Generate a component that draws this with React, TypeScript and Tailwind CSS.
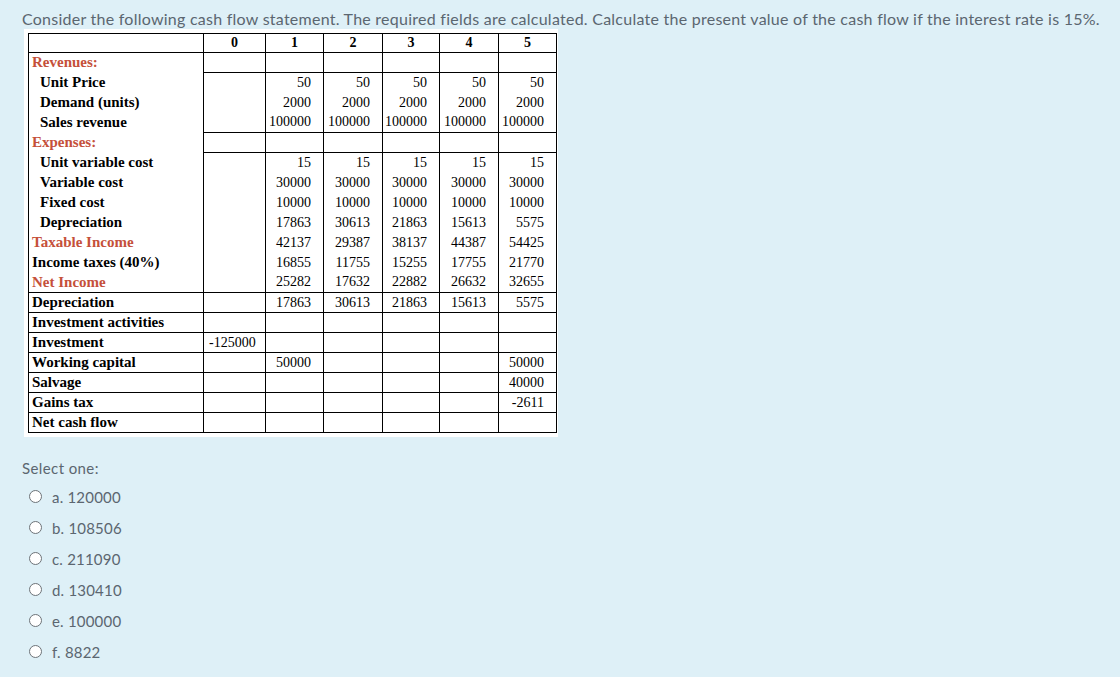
import React from "react";

type Row = {
  label: string;
  kind: "red" | "indent" | "plain";
  vals: (string | number)[];
  line?: "all" | "data";
};

const rows: Row[] = [
  { label: "Revenues:", kind: "red", vals: ["", "", "", "", "", ""], line: "data" },
  { label: "Unit Price", kind: "indent", vals: ["", 50, 50, 50, 50, 50] },
  { label: "Demand (units)", kind: "indent", vals: ["", 2000, 2000, 2000, 2000, 2000] },
  { label: "Sales revenue", kind: "indent", vals: ["", 100000, 100000, 100000, 100000, 100000], line: "data" },
  { label: "Expenses:", kind: "red", vals: ["", "", "", "", "", ""], line: "data" },
  { label: "Unit variable cost", kind: "indent", vals: ["", 15, 15, 15, 15, 15] },
  { label: "Variable cost", kind: "indent", vals: ["", 30000, 30000, 30000, 30000, 30000] },
  { label: "Fixed cost", kind: "indent", vals: ["", 10000, 10000, 10000, 10000, 10000] },
  { label: "Depreciation", kind: "indent", vals: ["", 17863, 30613, 21863, 15613, 5575] },
  { label: "Taxable Income", kind: "red", vals: ["", 42137, 29387, 38137, 44387, 54425] },
  { label: "Income taxes (40%)", kind: "plain", vals: ["", 16855, 11755, 15255, 17755, 21770] },
  { label: "Net Income", kind: "red", vals: ["", 25282, 17632, 22882, 26632, 32655], line: "all" },
  { label: "Depreciation", kind: "plain", vals: ["", 17863, 30613, 21863, 15613, 5575], line: "all" },
  { label: "Investment activities", kind: "plain", vals: ["", "", "", "", "", ""], line: "all" },
  { label: "Investment", kind: "plain", vals: ["-125000", "", "", "", "", ""], line: "all" },
  { label: "Working capital", kind: "plain", vals: ["", 50000, "", "", "", 50000], line: "all" },
  { label: "Salvage", kind: "plain", vals: ["", "", "", "", "", 40000], line: "all" },
  { label: "Gains tax", kind: "plain", vals: ["", "", "", "", "", -2611], line: "all" },
  { label: "Net cash flow", kind: "plain", vals: ["", "", "", "", "", ""], line: "all" },
];

const options = ["a. 120000", "b. 108506", "c. 211090", "d. 130410", "e. 100000", "f. 8822"];

function CashFlowTable() {
  return (
    <table
      className="table-fixed border-collapse border border-black text-black"
      style={{ fontFamily: '"Liberation Serif", "Times New Roman", serif' }}
    >
      <colgroup>
        <col className="w-[175px]" />
        <col className="w-[62px]" />
        <col className="w-[58px]" />
        <col className="w-[59px]" />
        <col className="w-[57px]" />
        <col className="w-[59px]" />
        <col className="w-[58px]" />
      </colgroup>
      <thead>
        <tr className="h-[19px]">
          <th className="border border-black p-0"></th>
          {[0, 1, 2, 3, 4, 5].map((n) => (
            <th key={n} className="border border-black p-0 text-center text-[14px] font-bold leading-none">
              {n}
            </th>
          ))}
        </tr>
      </thead>
      <tbody>
        {rows.map((r, i) => (
          <tr key={i} className="h-[20px]">
            <td
              className={
                "border-x border-black p-0 text-[15px] font-bold leading-none whitespace-nowrap " +
                (r.kind === "indent" ? "pl-[11px] " : "pl-[3px] ") +
                (r.kind === "red" ? "text-[#c5503a] " : "") +
                (r.line === "all" ? "border-b" : "")
              }
            >
              {r.label}
            </td>
            {r.vals.map((v, j) => (
              <td
                key={j}
                className={
                  "border-x border-black p-0 text-[14px] leading-none " +
                  (typeof v === "string" && v.startsWith("-") ? "text-left pl-[5px] " : "text-right pr-[12px] ") +
                  (r.line ? "border-b" : "")
                }
              >
                {v}
              </td>
            ))}
          </tr>
        ))}
      </tbody>
    </table>
  );
}

export default function App() {
  return (
    <div
      className="min-h-screen bg-[#def0f7] pl-[22px] pt-[9px] text-[#5b6670]"
      style={{ fontFamily: 'Lato, "Open Sans", sans-serif' }}
    >
      <p className="text-[16px] leading-[20px] tracking-[0.25px] whitespace-nowrap">
        Consider the following cash flow statement. The required fields are calculated. Calculate the present value of
        the cash flow if the interest rate is 15%.
      </p>
      <div className="ml-[2px] inline-block bg-white pl-[4px] pt-[4px] pr-[1px] pb-[4px]">
        <CashFlowTable />
      </div>
      <p className="mt-[15px] text-[15px] leading-[20px] tracking-[0.4px]">Select one:</p>
      <div className="mt-[3px] flex flex-col">
        {options.map((o) => (
          <label key={o} className="flex h-[31px] items-center pl-[7px]">
            <span className="h-[13px] w-[13px] rounded-full border-[1.5px] border-[#6d7378] bg-white" />
            <span className="ml-[10px] text-[15px] leading-[20px] tracking-[0.2px]">{o}</span>
          </label>
        ))}
      </div>
    </div>
  );
}
